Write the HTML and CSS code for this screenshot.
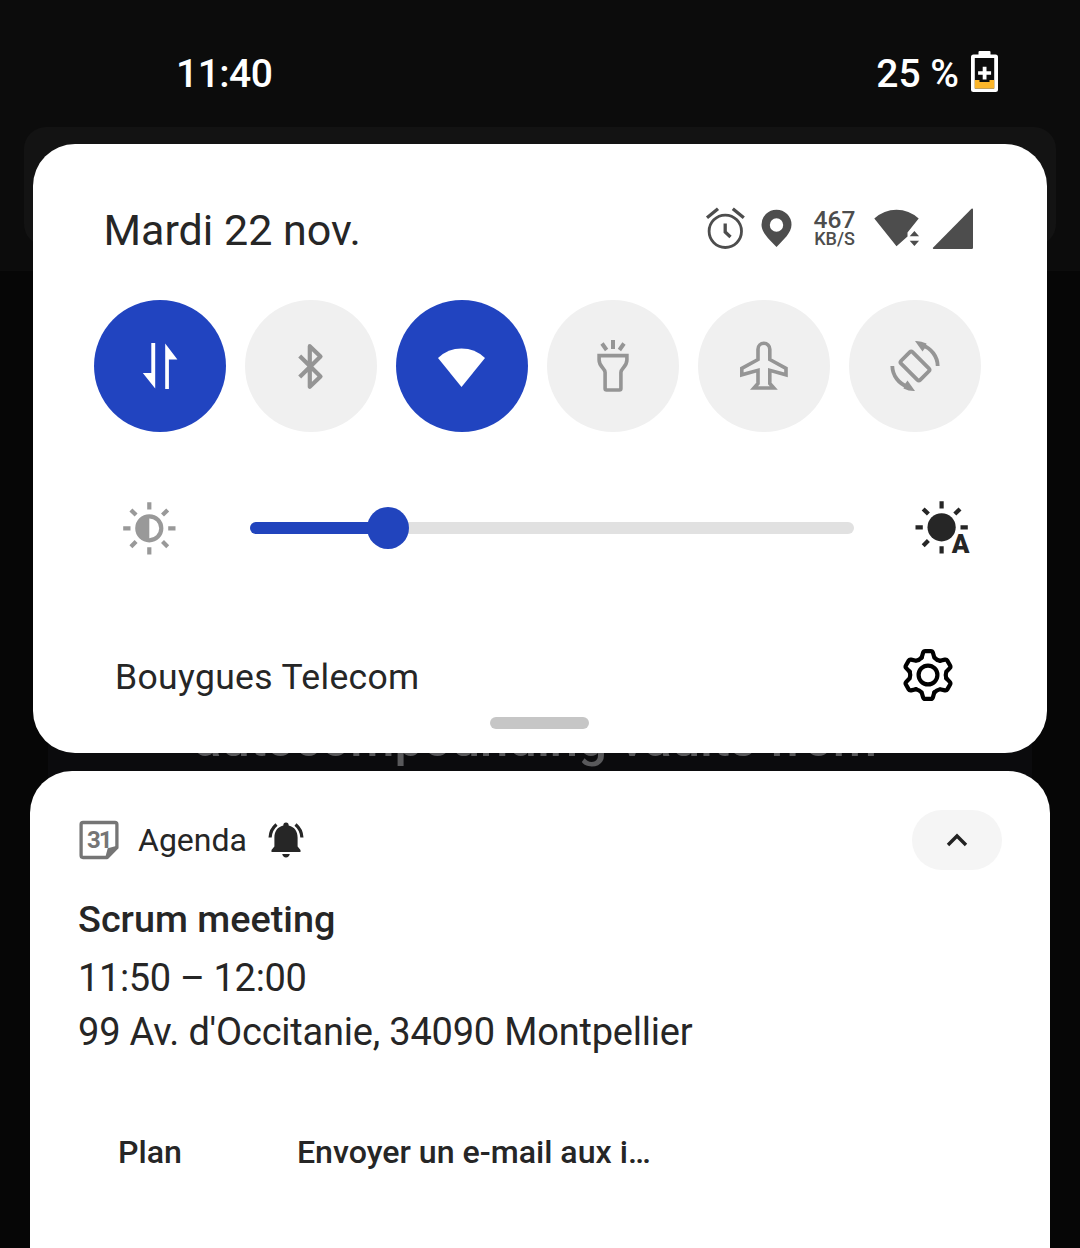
FILE: index.html
```html
<!DOCTYPE html>
<html lang="fr">
<head>
<meta charset="utf-8">
<title>Notifications</title>
<link rel="stylesheet" href="styles.css">
</head>
<body>
<div class="screen">
  <div class="behind" aria-hidden="true">
    <div class="behind-top"><div class="behind-search"></div></div>
    <div class="behind-card"><p class="behind-text">autocompounding vaults from</p></div>
  </div>

  <header class="status">
    <span class="clock">11:40</span>
    <span class="battery">25 %
      <svg width="28" height="42" viewBox="971 51 28 42">
        <path fill="#fff" fill-rule="evenodd" d="M979.5 51h10q1 0 1 1v2.500h5q2.500 0 2.500 2.500v32.500q0 2.500-2.500 2.500h-22q-2.500 0-2.500-2.500v-32.500q0-2.500 2.500-2.500h5v-2.500q0-1 1-1zM974.800 58v30.500h19.400v-30.500z"/>
        <path fill="#fbb62b" d="M974.800 80h4.700v2h10v-2h4.700v8.500h-19.400z"/>
        <path fill="#fff" d="M982.700 66.700h3.800v4.600h4.600v3.500h-4.600v4.700h-3.800v-4.700h-4.600v-3.500h4.600z"/>
      </svg>
    </span>
  </header>

  <section class="panel">
    <div class="panel-head">
      <span class="date">Mardi 22 nov.</span>
      <div class="indicators">
        <svg width="40" height="44" viewBox="705 206 40 44" fill="none" stroke="#4d4d4d">
          <circle cx="725.3" cy="231.300" r="16.200" stroke-width="2.800"/>
          <path stroke-width="3.300" d="M725.200 223.500v8.500l5.300 5M707 217.700l11-9M732.800 208.700l11 9"/>
        </svg>
        <svg class="pin" width="32" height="44" viewBox="761 206 32 44">
          <path fill="#4d4d4d" fill-rule="evenodd" d="M776.500 247C770 240 761.500 233 761.500 224.700a15 15 0 0 1 30 0C791.500 233 783 240 776.500 247zM776.500 218.300a6.700 6.700 0 1 0 0 13.400a6.700 6.700 0 1 0 0-13.400z"/>
        </svg>
        <span class="speed"><b>467</b><small>KB/S</small></span>
        <svg class="wifi" width="46" height="44" viewBox="874 206 46 44" fill="#4d4d4d">
          <path d="M896.500 246.300L874.300 218.600Q884 209.800 896.500 209.800T918.700 218.600L907.500 232.500v4z"/>
          <path d="M914.400 231l4.700 5.300h-9.400zM914.400 246l4.700-5.300h-9.400z"/>
        </svg>
        <svg class="signal" width="42" height="44" viewBox="932 206 42 44">
          <path fill="#4d4d4d" d="M971.500 208.700q1.500-.7 1.500 1v38q0 1.300-1.300 1.300h-38q-1.500 0-.5-1.500z"/>
        </svg>
      </div>
    </div>

    <div class="tiles">
      <button class="tile on" aria-label="Données mobiles"><svg width="132" height="132" viewBox="94 300 132 132">
        <path fill="#fff" d="M151.300 343h3.900v45.500L142.800 373h8.500zM165.200 343.500L177.400 359.500h-8.500v29.500h-3.700z"/></svg></button>
      <button class="tile" aria-label="Bluetooth"><svg width="132" height="132" viewBox="245 300 132 132">
        <path class="line" stroke-width="4.200" stroke-linejoin="round" d="M299.700 356l20.800 20.500-10.700 10.300v-40.600l10.700 10.300-20.800 20.500"/></svg></button>
      <button class="tile on" aria-label="Wi-Fi"><svg width="132" height="132" viewBox="396 300 132 132">
        <path fill="#fff" d="M461.500 387L438 358Q448 348.600 461.500 348.600T485 358z"/></svg></button>
      <button class="tile" aria-label="Lampe torche"><svg width="132" height="132" viewBox="547 300 132 132">
        <path class="line" stroke-width="3.600" d="M599.100 355.600h27.800v4.400c0 7-6 8-6 12.500v16a1.500 1.500 0 0 1-1.500 1.500h-12.800a1.500 1.500 0 0 1-1.500-1.500v-16c0-4.500-6-5.500-6-12.500z"/>
        <path class="line" stroke-width="4" d="M613 340v9M602 343.500l4.600 6.500M624 343.500l-4.600 6.500"/></svg></button>
      <button class="tile" aria-label="Mode avion"><svg width="132" height="132" viewBox="698 300 132 132">
        <path class="line" stroke-width="3.600" d="M758 349.200a5.900 5.900 0 0 1 11.800 0v10.300l16.200 8.900v6.400l-16.200-4.500v13.200l4 4.500h-19.800l4-4.500v-13.200l-16.200 4.500v-6.400l16.200-8.900z"/></svg></button>
      <button class="tile" aria-label="Rotation automatique"><svg width="132" height="132" viewBox="849 300 132 132">
        <rect class="line" stroke-width="3.800" x="901.500" y="357.900" width="27" height="16.200" rx="2" transform="rotate(45 915 366)"/>
        <g id="turn"><path class="line" stroke-width="3.800" d="M922 345C931.500 348.500 937.500 356.500 937.700 366"/>
        <path fill="#959595" d="M915 341q6-.3 11.500 2.500l-1.500 4.500-2.500 3.500z"/></g>
        <use href="#turn" transform="rotate(180 915 366)"/></svg></button>
    </div>

    <div class="brightness">
      <svg width="54" height="54" viewBox="122 501 54 54" fill="none" stroke="#999" stroke-width="4.200">
        <circle cx="149.300" cy="528.300" r="12"/>
        <path fill="#999" stroke="none" d="M149.300 515.300v26a13 13 0 0 1 0-26z"/>
        <path d="M149.300 502.200v7.300M149.300 547.200v7.300M123.200 528.300h7.300M168.200 528.300h7.300M130.900 509.900l5.200 5.200M162.500 541.500l5.200 5.200M167.700 509.900l-5.200 5.200M136.100 541.500l-5.200 5.200"/>
      </svg>
      <div class="track"><div class="fill"></div><div class="knob"></div></div>
      <svg width="56" height="56" viewBox="915 500 56 56">
        <circle cx="941.600" cy="527.300" r="14.100" fill="#262626"/>
        <path fill="none" stroke="#262626" stroke-width="4.200" d="M941.600 501.300v7.300M941.600 546.200v7.300M915.500 527.300h7.300M960.500 527.300h7.300M923.200 508.900l5.200 5.200M960 508.900l-5.200 5.200M928.400 540.500l-5.200 5.200"/>
        <text x="960.500" y="553.300" text-anchor="middle" class="auto">A</text>
      </svg>
    </div>

    <div class="panel-foot">
      <span class="carrier">Bouygues Telecom</span>
      <svg width="54" height="56" viewBox="-27 -28 54 56" fill="none" stroke="#000" stroke-width="4.200" stroke-linecap="round" stroke-linejoin="round">
        <circle r="9.400"/>
        <path id="tooth" d="M-6.300-17.500L-4.900-22.300Q-4.400-23.900-2.800-23.900H2.800Q4.400-23.900 4.900-22.300L6.300-17.500Q8.600-14.900 12-14.200"/>
        <use href="#tooth" transform="rotate(60)"/><use href="#tooth" transform="rotate(120)"/><use href="#tooth" transform="rotate(180)"/><use href="#tooth" transform="rotate(240)"/><use href="#tooth" transform="rotate(300)"/>
      </svg>
    </div>
    <div class="handle"></div>
  </section>

  <article class="notif">
    <div class="notif-head">
      <svg width="40" height="40" viewBox="79 820 40 40">
        <path fill="none" stroke="#757575" stroke-width="3.300" stroke-linejoin="round" d="M83 822.500h32q1.900 0 1.900 1.900v23.300l-9.800 9.800h-24.100q-1.900 0-1.900-1.900v-31.200q0-1.900 1.900-1.900z"/>
        <path fill="#757575" d="M105.300 857.500l2.400-9.300 9.300-2.400v2.500l-9.200 9.200z"/>
        <text x="87" y="848.300" class="day">31</text>
      </svg>
      <span class="app">Agenda</span>
      <svg class="bell" width="36" height="38" viewBox="268 821 36 38">
        <path fill="#262626" d="M286 822.500q2.700 0 2.700 3c6 1.500 8.900 6 8.900 12v9l2.900 3.500v2h-29v-2l2.900-3.500v-9c0-6 2.900-10.500 8.900-12q0-3 2.700-3zM282.200 854h7.600q-.8 3.400-3.800 3.400t-3.800-3.400z"/>
        <path fill="none" stroke="#262626" stroke-width="3.200" d="M276.500 824.500q-6 5-6.400 13M295.500 824.500q6 5 6.400 13"/>
      </svg>
      <button class="collapse" aria-label="Réduire"><svg width="24" height="16" viewBox="0 0 24 16"><path fill="none" stroke="#222" stroke-width="3.400" d="M3 13l9-9 9 9"/></svg></button>
    </div>
    <h2 class="title">Scrum meeting</h2>
    <p class="line1">11:50 – 12:00</p>
    <p class="line2">99 Av. d'Occitanie, 34090 Montpellier</p>
    <div class="actions"><span class="plan">Plan</span><span class="mail">Envoyer un e-mail aux i…</span></div>
  </article>
</div>
</body>
</html>
```
FILE: styles.css
```css
* { box-sizing: border-box; margin: 0; padding: 0; }
body { background: #060606; font-family: Roboto, "Liberation Sans", sans-serif; color: #262626; }
svg { display: block; flex: none; overflow: visible; }
button { border: 0; font: inherit; }

.screen { position: relative; width: 1080px; height: 1248px; overflow: hidden; display: flex; flex-direction: column; }

/* dimmed page under the shade */
.behind { position: absolute; inset: 0; }
.behind-top { height: 271px; padding: 127px 24px 0; background: #0c0c0c; }
.behind-search { height: 119px; border-radius: 22px; background: #131313; }
.behind-card { margin: 429px 48px 0; height: 100px; background: #0b0b0d; }
.behind-text { padding: 7px 9px 0 0; text-align: center; font: 500 50.8px/64px Roboto, sans-serif; color: #59595b; white-space: nowrap; }

.status { position: relative; flex: none; height: 144px; padding: 51px 81px 0 176px; display: flex; justify-content: space-between; font-weight: 500; font-size: 39px; line-height: 46px; color: #fff; }
.clock { letter-spacing: -.5px; }
.battery { display: flex; gap: 12px; }

.panel { position: relative; flex: none; margin: 0 33px; height: 609px; border-radius: 42px; background: #fff; display: flex; flex-direction: column; }
.panel-head { flex: none; height: 156px; padding: 60px 73px 0 70.5px; display: flex; justify-content: space-between; align-items: flex-start; }
.date { font-size: 43px; line-height: 52px; }
.indicators { display: flex; padding-top: 2px; color: #4d4d4d; }
.pin { margin-left: 16px; }
.speed { width: 42px; margin: 3px 0 0 20.5px; display: flex; flex-direction: column; align-items: center; }
.speed b { font: 500 24.5px/21px Roboto, sans-serif; }
.speed small { font: 500 18px/17px Roboto, sans-serif; }
.wifi { margin-left: 18.5px; }
.signal { margin-left: 12px; }

.tiles { display: flex; gap: 19px; padding-left: 61px; }
.tile { width: 132px; height: 132px; flex: none; border-radius: 50%; background: #f0f0f0; }
.tile.on { background: #2144c0; }
.line { fill: none; stroke: #959595; }

.brightness { margin-top: 68px; height: 56px; padding: 0 76px 0 89px; display: flex; align-items: center; }
.track { position: relative; width: 604px; height: 12px; margin: 0 61px 0 74px; border-radius: 6px; background: #e1e1e1; }
.fill { width: 138px; height: 12px; border-radius: 6px; background: #2144bd; }
.knob { position: absolute; left: 117px; top: -15px; width: 42px; height: 42px; border-radius: 50%; background: #2144bd; }
.auto { font: 900 26px Roboto, sans-serif; fill: #262626; }

.panel-foot { margin-top: 91px; height: 56px; padding: 0 92px 0 82px; display: flex; justify-content: space-between; align-items: center; }
.carrier { padding-top: 3px; font-size: 35.5px; line-height: 44px; letter-spacing: .35px; }
.handle { width: 99px; height: 12px; margin: 14px 0 0 457px; border-radius: 6px; background: #c6c6c6; }

.notif { position: relative; flex: none; margin: 18px 30px 0; height: 500px; border-radius: 42px 42px 0 0; background: #fff; padding: 39px 48px 0; }
.notif-head { display: flex; align-items: center; height: 60px; padding-left: 1px; }
.app { margin-left: 19px; font-size: 32px; line-height: 40px; }
.bell { margin-left: 21px; }
.day { font: 700 24px Roboto, sans-serif; letter-spacing: -2px; fill: #757575; }
.collapse { margin-left: auto; width: 90px; height: 60px; border-radius: 30px; background: #f5f5f5; display: grid; place-items: center; }
.title { margin-top: 23px; font-weight: 500; font-size: 37.8px; line-height: 52px; }
.line1, .line2 { font-size: 38px; line-height: 54px; }
.line1 { margin-top: 6px; letter-spacing: -.35px; }
.line2 { letter-spacing: -.21px; }
.actions { margin-top: 73px; padding-left: 40px; display: flex; font-weight: 500; font-size: 32.15px; line-height: 40px; }
.mail { margin-left: 115px; }
```
